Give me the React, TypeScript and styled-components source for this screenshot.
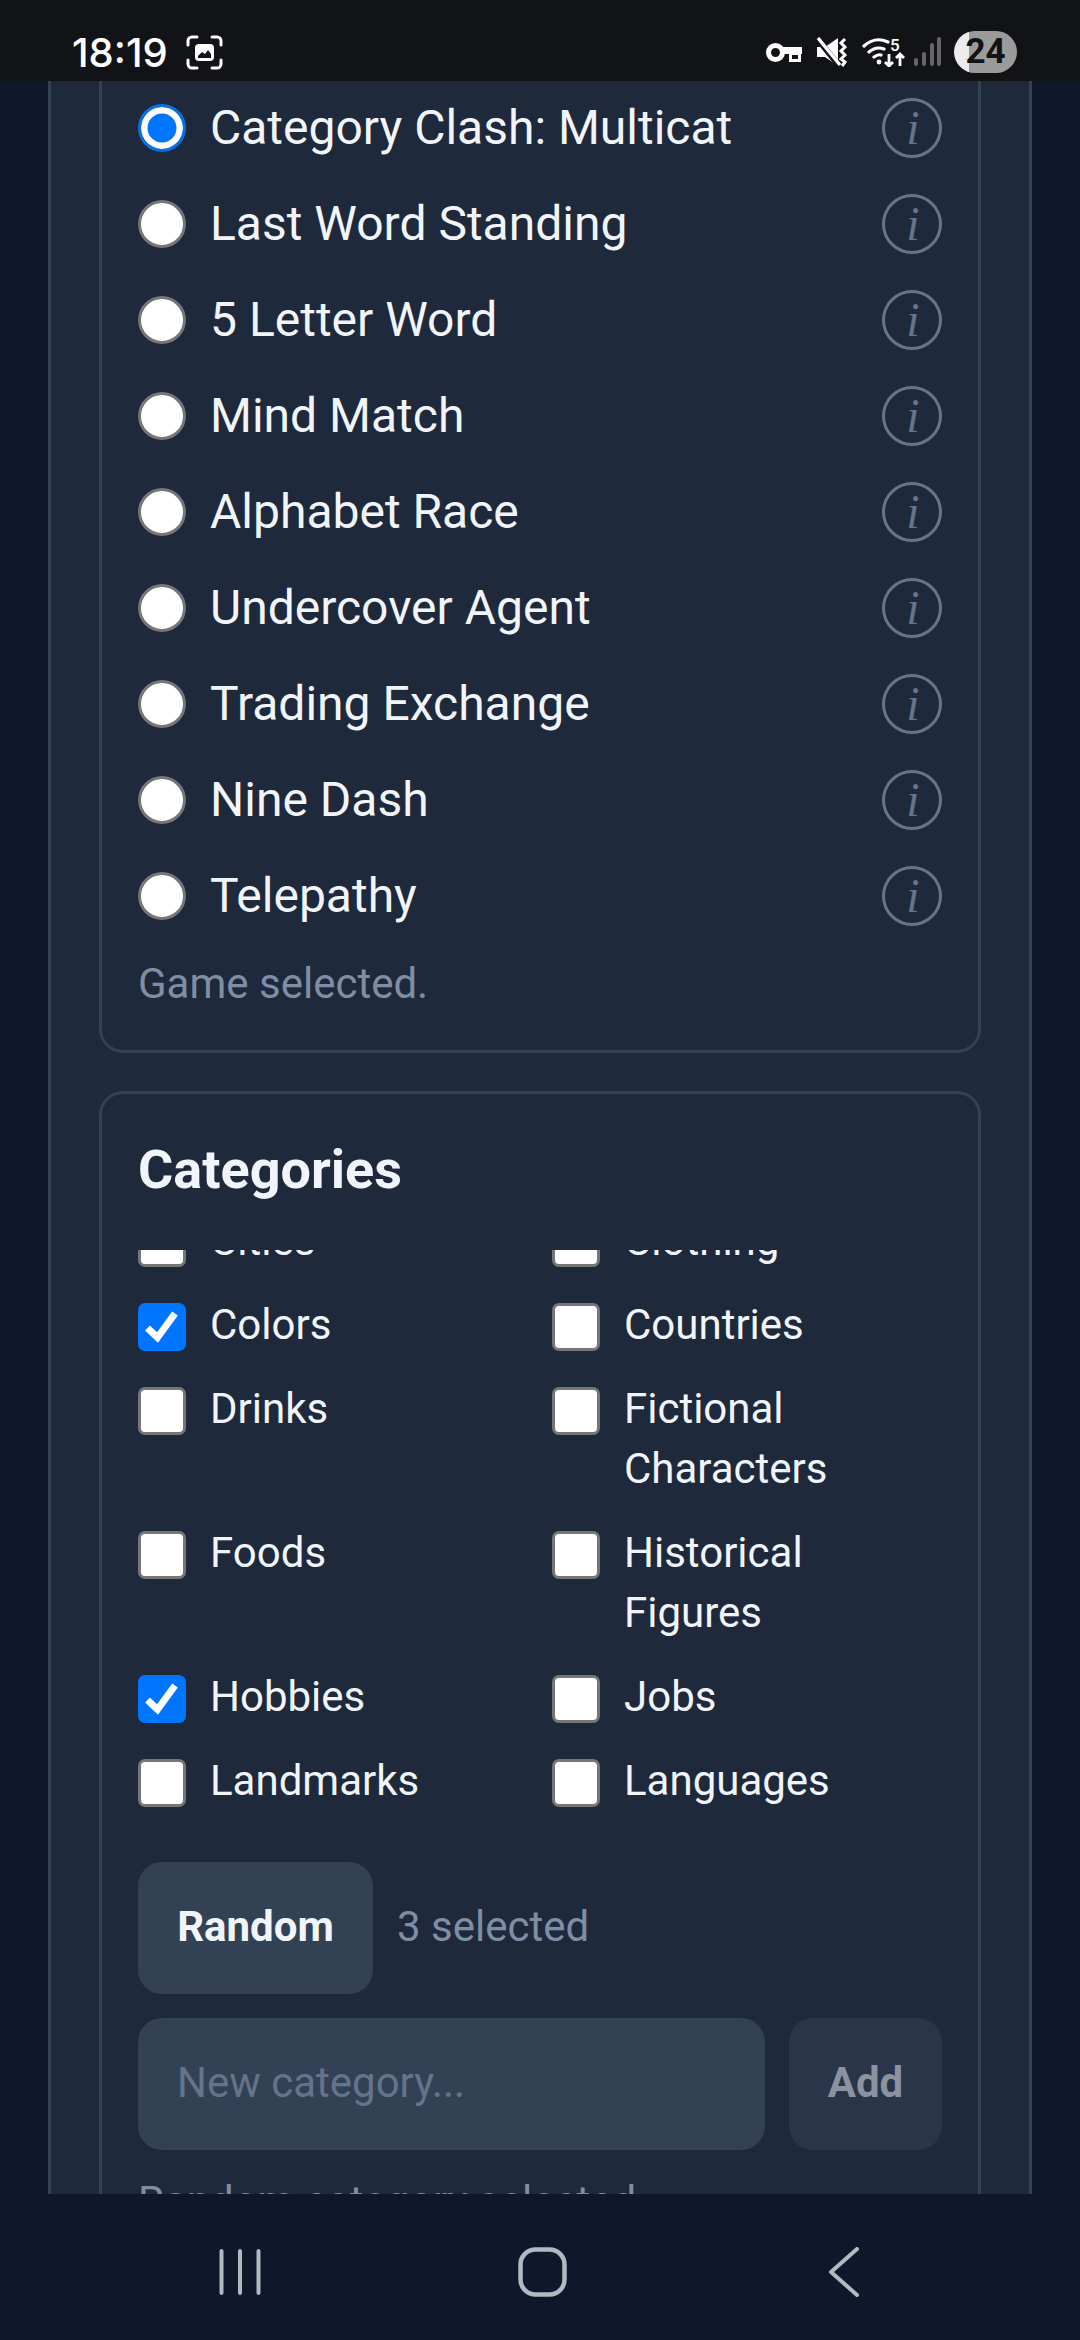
import React from "react";
import styled, { createGlobalStyle } from "styled-components";

const Global = createGlobalStyle`
  html, body { margin: 0; padding: 0; background: #0f172a; }
  * { box-sizing: border-box; }
`;

const Screen = styled.div`
  width: 1080px;
  height: 2340px;
  display: flex;
  flex-direction: column;
  overflow: hidden;
  background: #0f172a;
  font-family: Roboto, "Liberation Sans", sans-serif;
  color: #f1f5f9;
`;

const StatusBar = styled.div`
  flex: 0 0 81px;
  background: #121317;
  display: flex;
  align-items: center;
  justify-content: space-between;
  padding: 23px 63px 0 72px;
  color: #fff;
`;
const StatusLeft = styled.div`
  display: flex;
  align-items: center;
  gap: 18px;
`;
const Time = styled.span`
  font-family: Inter, Roboto, sans-serif;
  font-size: 40px;
  font-weight: 500;
`;
const StatusRight = styled.div`
  display: flex;
  align-items: center;
  gap: 12px;
`;
const Battery = styled.div`
  width: 63px;
  height: 42px;
  border-radius: 21px;
  background: linear-gradient(90deg, #ececec 0 15px, #9b9b9b 15px);
  color: #121317;
  font-size: 35px;
  font-weight: 700;
  line-height: 42px;
  text-align: center;
`;

const Viewport = styled.div`
  flex: 1;
  overflow: hidden;
  padding: 0 48px;
`;
const Outer = styled.div`
  margin-top: -200px;
  padding: 0 48px;
  background: #1e293b;
  border: 3px solid #334155;
  border-width: 0 3px;
  display: flex;
  flex-direction: column;
  gap: 38px;
`;
const Card = styled.section`
  background: #1e293b;
  border: 3px solid #334155;
  border-radius: 24px;
  padding: 36px;
`;
const GameCard = styled(Card)`
  padding-top: 196px;
`;
const GameRow = styled.div`
  height: 96px;
  display: flex;
  align-items: center;
`;
const Radio = styled.span<{ $on?: boolean }>`
  flex: none;
  width: 48px;
  height: 48px;
  border-radius: 50%;
  background: ${(p) => (p.$on ? "#0075ff" : "#fff")};
  border: 3px solid ${(p) => (p.$on ? "#0b6fe4" : "#767676")};
  box-shadow: ${(p) => (p.$on ? "inset 0 0 0 6.5px #fff" : "none")};
`;
const GameName = styled.span`
  flex: 1;
  margin-left: 24px;
  font-size: 48px;
  line-height: 60px;
  color: #f1f5f9;
`;
const InfoButton = styled.span`
  flex: none;
  width: 60px;
  height: 60px;
  padding-left: 2px;
  border-radius: 50%;
  border: 3px solid #64748b;
  color: #64748b;
  display: flex;
  align-items: center;
  justify-content: center;
  font-family: "Liberation Serif", serif;
  font-style: italic;
  font-size: 48px;
  line-height: 1;
`;
const Hint = styled.p`
  margin: 10px 0 0;
  font-size: 42px;
  line-height: 60px;
  color: #7f8ea3;
`;
const CategoryHint = styled(Hint)`
  margin-top: 22px;
`;
const Title = styled.h2`
  margin: 4px 0 0;
  font-size: 54px;
  font-weight: 700;
  line-height: 72px;
  color: #f1f5f9;
`;
const CategoryBox = styled.div`
  height: 588px;
  margin-top: 44px;
  overflow: hidden;
`;
const CategoryGrid = styled.div`
  margin-top: -39px;
  display: grid;
  grid-template-columns: 1fr 1fr;
  gap: 24px;
`;
const CategoryItem = styled.label`
  display: flex;
  align-items: flex-start;
  gap: 24px;
  font-size: 42px;
  line-height: 60px;
  color: #f1f5f9;
`;
const Check = styled.span<{ $on?: boolean }>`
  flex: none;
  width: 48px;
  height: 48px;
  margin-top: 8px;
  border-radius: 7px;
  background: ${(p) => (p.$on ? "#0075ff" : "#fff")};
  border: ${(p) => (p.$on ? "none" : "3px solid #767676")};
  svg { display: block; }
`;
const RandomRow = styled.div`
  margin-top: 24px;
  display: flex;
  align-items: center;
  gap: 24px;
`;
const RandomButton = styled.button`
  width: 235px;
  height: 132px;
  padding: 0 0 3px;
  border: none;
  border-radius: 24px;
  background: #334155;
  color: #f1f5f9;
  font: 700 42px Roboto, sans-serif;
`;
const Count = styled.span`
  padding-bottom: 3px;
  font-size: 42px;
  color: #7f8ea3;
`;
const AddRow = styled.div`
  margin-top: 24px;
  display: flex;
  gap: 24px;
`;
const CategoryInput = styled.input`
  flex: 1;
  min-width: 0;
  height: 132px;
  border: none;
  border-radius: 24px;
  background: #334155;
  padding: 0 39px 3px;
  font: 400 42px Roboto, sans-serif;
  color: #f1f5f9;
  &::placeholder { color: #64748b; opacity: 1; }
`;
const AddButton = styled.button`
  width: 153px;
  height: 132px;
  padding: 0 0 3px;
  border: none;
  border-radius: 24px;
  background: #293548;
  color: #8b93a1;
  font: 700 42px Roboto, sans-serif;
`;
const NavBar = styled.div`
  flex: 0 0 146px;
  background: #0f172a;
  display: flex;
  align-items: center;
  padding: 10px 0 0 89px;
`;
const NavSlot = styled.div`
  width: 302px;
  display: flex;
  justify-content: center;
  svg { display: block; }
`;

const games = ["Category Clash: Multicat", "Last Word Standing", "5 Letter Word", "Mind Match", "Alphabet Race", "Undercover Agent", "Trading Exchange", "Nine Dash", "Telepathy"];
const cats: [string, boolean][] = [["Cities", false], ["Clothing", false], ["Colors", true], ["Countries", false], ["Drinks", false], ["Fictional Characters", false], ["Foods", false], ["Historical Figures", false], ["Hobbies", true], ["Jobs", false], ["Landmarks", false], ["Languages", false]];

const Tick = () => (
  <svg width="48" height="48" viewBox="0 0 48 48" fill="none">
    <path d="M9.5 25l10 9.5L37 10.5" stroke="#fff" strokeWidth="7" />
  </svg>
);

export default function App() {
  return (
    <Screen>
      <Global />
      <StatusBar>
        <StatusLeft>
          <Time>18:19</Time>
          <svg width="37" height="35" viewBox="0 0 37 35" fill="none" stroke="#fff" strokeWidth="3" strokeLinecap="round">
            <path d="M2 10V6a4 4 0 0 1 4-4h5M26 2h5a4 4 0 0 1 4 4v4M35 25v4a4 4 0 0 1-4 4h-5M11 33H6a4 4 0 0 1-4-4v-4" />
            <rect x="9" y="9" width="19" height="17" rx="4" fill="#fff" stroke="none" />
            <path d="M12 23v-2l4-4 3 2 3-4 3 4v4z" fill="#121317" stroke="none" />
          </svg>
        </StatusLeft>
        <StatusRight>
          <svg width="176" height="30" viewBox="0 0 176 30" fill="none">
            <circle cx="9.5" cy="15.5" r="7" stroke="#fff" strokeWidth="5" />
            <path d="M16 10h20v7h-1v8h-12v-8h-7z" fill="#fff" />
            <path d="M26 18h6v4h-6z" fill="#121317" />
            <path d="M51 10h8L72 1v28L59 20H51z" fill="#fff" />
            <path d="M50 0l24 30" stroke="#121317" strokeWidth="6" />
            <path d="M52 1l22 27" stroke="#fff" strokeWidth="3.4" />
            <path d="M79 2l-4 4 4 4-4 4 4 4-4 4 4 3-3 4" stroke="#fff" strokeWidth="3" />
            <g stroke="#fff" strokeWidth="3.2" strokeLinecap="round">
              <path d="M98 9Q109-1 122 5M103 15Q110 9 118 12M108 20Q112 17 115 18" />
              <path d="M123 17v12M119 25l4 4 4-4M134 29V17M130 21l4-4 4 4" strokeWidth="2.8" strokeLinecap="butt" />
            </g>
            <circle cx="113" cy="25" r="2.4" fill="#fff" />
            <text x="124" y="13.5" fontSize="17" fill="#fff" fontFamily="Roboto" fontWeight="500">5</text>
            <g fill="#666">
              <rect x="148" y="21" width="4" height="8" rx="2" />
              <rect x="156" y="15" width="4" height="14" rx="2" />
              <rect x="164" y="6" width="4" height="23" rx="2" />
              <rect x="171" y="0" width="4" height="29" rx="2" />
            </g>
          </svg>
          <Battery>24</Battery>
        </StatusRight>
      </StatusBar>
      <Viewport>
        <Outer>
          <GameCard>
            {games.map((g, i) => (
              <GameRow key={g}>
                <Radio $on={i === 0} />
                <GameName>{g}</GameName>
                <InfoButton>i</InfoButton>
              </GameRow>
            ))}
            <Hint>Game selected.</Hint>
          </GameCard>
          <Card>
            <Title>Categories</Title>
            <CategoryBox>
              <CategoryGrid>
                {cats.map(([c, on]) => (
                  <CategoryItem key={c}>
                    <Check $on={on}>{on && <Tick />}</Check>
                    <span>{c}</span>
                  </CategoryItem>
                ))}
              </CategoryGrid>
            </CategoryBox>
            <RandomRow>
              <RandomButton>Random</RandomButton>
              <Count>3 selected</Count>
            </RandomRow>
            <AddRow>
              <CategoryInput placeholder="New category..." />
              <AddButton>Add</AddButton>
            </AddRow>
            <CategoryHint>Random category selected.</CategoryHint>
          </Card>
        </Outer>
      </Viewport>
      <NavBar>
        <NavSlot>
          <svg width="42" height="48" viewBox="0 0 42 48" stroke="#b4b8c0" strokeWidth="4" strokeLinecap="round">
            <path d="M2.5 3v42M21 3v42M39.5 3v42" />
          </svg>
        </NavSlot>
        <NavSlot>
          <svg width="49" height="50" viewBox="0 0 49 50" fill="none" stroke="#b4b8c0" strokeWidth="4.5">
            <rect x="2.5" y="2.5" width="44" height="45" rx="15" />
          </svg>
        </NavSlot>
        <NavSlot>
          <svg width="32" height="50" viewBox="0 0 32 50" fill="none" stroke="#b4b8c0" strokeWidth="4" strokeLinecap="round" strokeLinejoin="round">
            <path d="M29 2L3 25l26 23" />
          </svg>
        </NavSlot>
      </NavBar>
    </Screen>
  );
}
